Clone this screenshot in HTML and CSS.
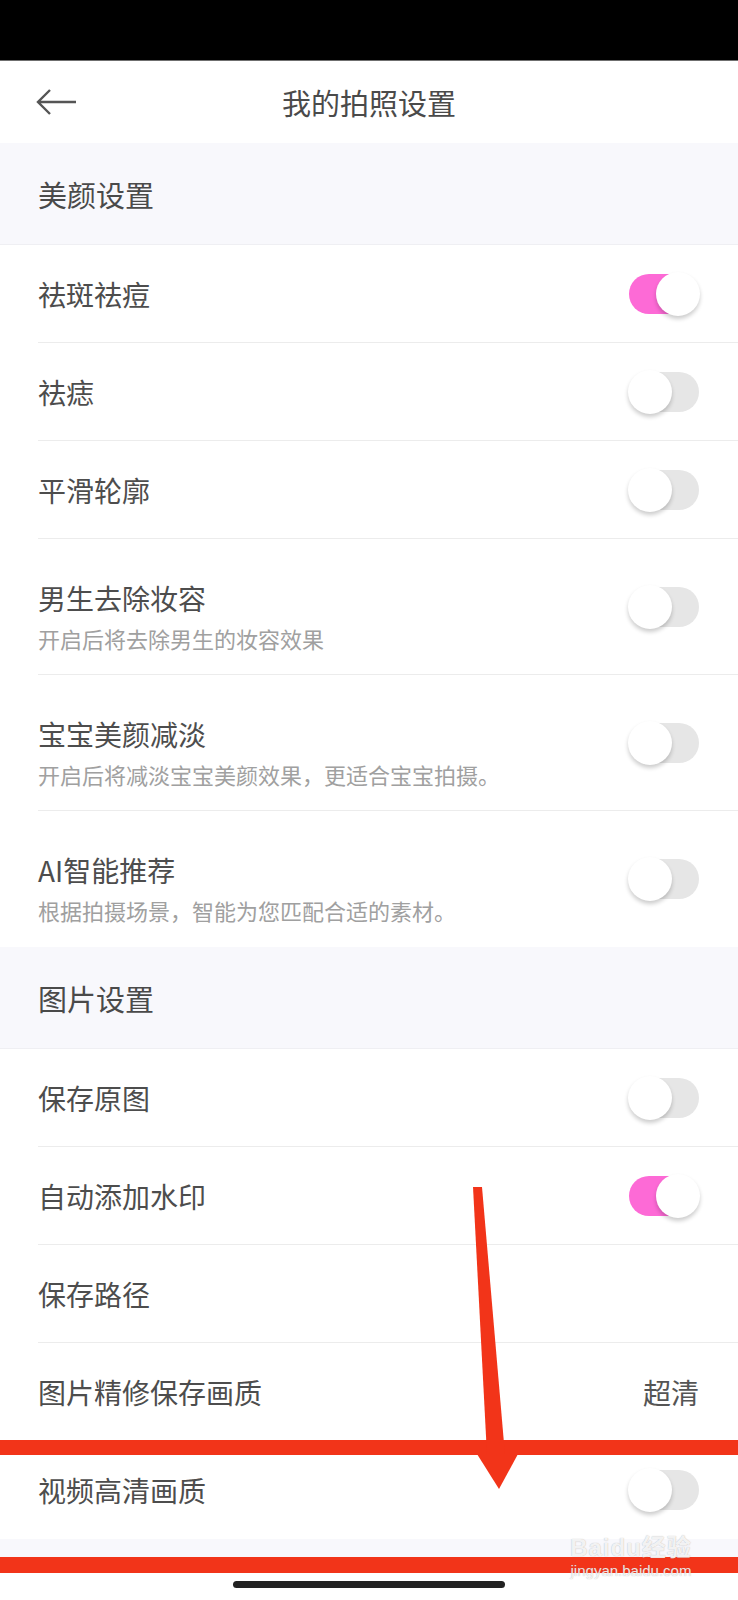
FILE: index.html
```html
<!DOCTYPE html>
<html lang="zh-CN">

<head>
    <meta charset="UTF-8">
    <meta name="viewport" content="width=device-width, initial-scale=1.0">
    <title>我的拍照设置</title>
    <link rel="stylesheet" href="styles.css">
</head>

<body>
    <div class="status"></div>

    <div class="nav">
        <span class="back">
            <svg width="42" height="28" viewBox="0 0 42 28">
                <path d="M41 14H3M15 2L3 14l12 12" fill="none" stroke="#555" stroke-width="2.4" />
            </svg>
        </span>
        <h1 class="title">我的拍照设置</h1>
        <span></span>
    </div>

    <!-- BEAUTY -->
    <div class="sectionTitle">美颜设置</div>
    <ul class="group">
        <li class="item">
            <div class="name">祛斑祛痘</div>
            <span class="switch on"></span>
        </li>
        <li class="item">
            <div class="name">祛痣</div>
            <span class="switch"></span>
        </li>
        <li class="item">
            <div class="name">平滑轮廓</div>
            <span class="switch"></span>
        </li>
        <li class="item double">
            <div class="text">
                <div class="name">男生去除妆容</div>
                <div class="desc">开启后将去除男生的妆容效果</div>
            </div>
            <span class="switch"></span>
        </li>
        <li class="item double">
            <div class="text">
                <div class="name">宝宝美颜减淡</div>
                <div class="desc">开启后将减淡宝宝美颜效果，更适合宝宝拍摄。</div>
            </div>
            <span class="switch"></span>
        </li>
        <li class="item double">
            <div class="text">
                <div class="name">AI智能推荐</div>
                <div class="desc">根据拍摄场景，智能为您匹配合适的素材。</div>
            </div>
            <span class="switch"></span>
        </li>
    </ul>

    <!-- PICTURE -->
    <div class="sectionTitle">图片设置</div>
    <ul class="group">
        <li class="item">
            <div class="name">保存原图</div>
            <span class="switch"></span>
        </li>
        <li class="item">
            <div class="name">自动添加水印</div>
            <span class="switch on"></span>
        </li>
        <li class="item">
            <div class="name">保存路径</div>
        </li>
        <li class="item">
            <div class="name">图片精修保存画质</div>
            <span class="value">超清</span>
        </li>
        <li class="item">
            <div class="name">视频高清画质</div>
            <span class="switch"></span>
        </li>
    </ul>

    <div class="footer"></div>
    <div class="home"><span class="homeBar"></span></div>

    <!-- red marks drawn over the screenshot -->
    <svg class="marks" width="738" height="1600" viewBox="0 0 738 1600">
        <rect x="0" y="1440" width="738" height="15" fill="#f23419" />
        <rect x="0" y="1557" width="738" height="16" fill="#f23419" />
        <polygon points="473,1187 482,1187 505,1455 487,1455" fill="#f23419" />
        <polygon points="477,1454 518,1454 499,1489" fill="#f23419" />
    </svg>

    <div class="watermark">
        <div class="brand">Bai<span class="paw">du</span>经验</div>
        <div class="site">jingyan.baidu.com</div>
    </div>
</body>

</html>
```

FILE: styles.css
```css
body {
    margin: 0px;
    padding: 0px;
    width: 738px;
    position: relative;
    background-color: white;
    font-family: "Noto Sans CJK SC", "Noto Sans", sans-serif;
    color: #4d4d4d;

    .status {
        height: 60px;
        background-color: black;
        border-bottom: 1px solid #6f6f6f;
    }

    .nav {
        height: 82px;
        display: grid;
        grid-template-columns: 1fr auto 1fr;
        align-items: center;

        .back {
            padding-left: 35px;
            display: flex;
            align-items: center;
        }

        .title {
            margin: 0px;
            font-size: 29px;
            font-weight: normal;
            color: #4a4a4a;
        }
    }

    .sectionTitle {
        height: 101px;
        display: flex;
        align-items: center;
        padding-left: 38px;
        background-color: #f8f8fc;
        border-bottom: 1px solid #efeff3;
        font-size: 29px;
        color: #4a4a4a;
    }

    .group {
        list-style: none;
        margin: 0px;
        padding: 0px;

        .item {
            box-sizing: border-box;
            height: 98px;
            margin-left: 38px;
            padding-right: 39px;
            display: flex;
            align-items: center;
            justify-content: space-between;
            border-bottom: 1px solid #ececec;

            .name {
                font-size: 28px;
                line-height: 38px;
            }

            .value {
                font-size: 28px;
                color: #555;
            }
        }

        .item:last-child {
            border-bottom: none;
        }

        .double {
            height: 136px;

            .text {
                margin-top: 18px;
                display: flex;
                flex-direction: column;
                gap: 6px;
            }

            .desc {
                font-size: 22px;
                line-height: 30px;
                color: #a0a0a0;
            }
        }
    }

    .switch {
        width: 70px;
        height: 40px;
        border-radius: 20px;
        background-color: #e6e6e6;
        position: relative;
        flex-shrink: 0;
    }

    .switch::after {
        content: "";
        position: absolute;
        top: -2px;
        left: -1px;
        width: 44px;
        height: 44px;
        border-radius: 50%;
        background-color: white;
        box-shadow: 0 3px 4px rgba(0, 0, 0, 0.2);
    }

    .switch.on {
        background-color: #fd6ad6;
    }

    .switch.on::after {
        left: 27px;
    }

    .footer {
        height: 24px;
        background-color: #f8f8fc;
    }

    .home {
        height: 37px;
        display: flex;
        justify-content: center;

        .homeBar {
            margin-top: 18px;
            width: 272px;
            height: 7px;
            border-radius: 4px;
            background-color: #222;
        }
    }

    .marks {
        position: absolute;
        top: 0px;
        left: 0px;
        pointer-events: none;
    }

    .watermark {
        position: absolute;
        left: 562px;
        top: 1534px;
        width: 138px;
        color: rgba(255, 255, 255, 0.85);
        text-shadow: 0 0 1px rgba(120, 120, 120, 0.6);
        font-family: "Liberation Sans", "Noto Sans CJK SC", sans-serif;
        text-align: center;

        .brand {
            font-size: 24px;
            font-weight: bold;
            line-height: 28px;
            letter-spacing: 1px;
        }

        .site {
            font-size: 15px;
            line-height: 18px;
        }
    }
}
```
